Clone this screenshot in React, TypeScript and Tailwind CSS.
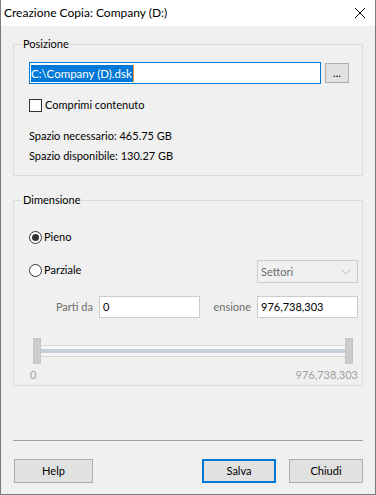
import React from "react";

const font = { fontFamily: 'Lato, "Noto Sans", sans-serif' };

function Legend({ label }: { label: string }) {
  return (
    <span className="absolute left-[8px] -top-[9px] px-[1px] bg-[#f0f0f0] leading-[16px] text-black">
      {label}
    </span>
  );
}

function Radio({ checked }: { checked?: boolean }) {
  return (
    <span className="w-[13px] h-[13px] rounded-full border border-[#333333] bg-white flex items-center justify-center shrink-0">
      {checked && <span className="w-[7px] h-[7px] rounded-full bg-[#333333]" />}
    </span>
  );
}

function Btn({ label, primary, w }: { label: string; primary?: boolean; w: string }) {
  return (
    <button
      className={
        primary
          ? `${w} h-[24px] bg-[#e1e1e1] border-2 border-[#0078d7] text-black leading-[16px]`
          : `${w} h-[24px] bg-[#e1e1e1] border border-[#adadad] text-black leading-[16px]`
      }>
      {label}
    </button>
  );
}

export default function App() {
  return (
    <div
      style={font}
      className="w-[376px] h-[495px] flex flex-col border-x border-b border-[#7a7a7a] bg-[#f0f0f0] text-[11px] text-black overflow-hidden">
      {/* title bar */}
      <div className="h-[26px] bg-white flex items-center justify-between pl-[3px] pr-[9px] shrink-0">
        <span className="text-[12px] leading-[16px]">Creazione Copia: Company (D:)</span>
        <svg width="12" height="12" viewBox="0 0 12 12">
          <path d="M1 1 L11 11 M11 1 L1 11" stroke="#000" strokeWidth="1" />
        </svg>
      </div>

      <div className="flex flex-col px-[12px] pt-[18px]">
        {/* Posizione */}
        <div className="relative border border-[#dcdcdc] pl-[15px] pr-[13px] pt-[17px] pb-[11px] flex flex-col">
          <Legend label="Posizione" />
          <div className="flex items-center">
            <div className="flex-1 h-[22px] border border-[#0078d7] bg-white flex items-center pl-[1px]">
              <span className="bg-[#0078d7] text-white text-[11.5px] leading-[17px] pr-[1px]">C:\Company (D).dsk</span>
              <span className="w-[1px] h-[17px] bg-[#f7941d]" />
            </div>
            <button className="ml-[4px] w-[24px] h-[20px] bg-[#e1e1e1] border border-[#adadad] leading-[12px] text-black">
              ...
            </button>
          </div>
          <div className="mt-[13px] h-[16px] flex items-center gap-[3px]">
            <span className="w-[13px] h-[13px] border border-[#333333] bg-white" />
            <span className="leading-[16px]">Comprimi contenuto</span>
          </div>
          <div className="mt-[15px] leading-[16px]">Spazio necessario: 465.75 GB</div>
          <div className="mt-[4px] leading-[16px]">Spazio disponibile: 130.27 GB</div>
        </div>

        {/* Dimensione */}
        <div className="relative mt-[24px] border border-[#dcdcdc] pl-[15px] pr-[4px] pt-[28px] pb-[2px] flex flex-col">
          <Legend label="Dimensione" />
          <div className="h-[16px] flex items-center gap-[2px]">
            <Radio checked />
            <span className="leading-[16px]">Pieno</span>
          </div>
          <div className="mt-[15px] h-[23px] flex items-start justify-between">
            <div className="flex items-center gap-[2px] mt-[2px]">
              <Radio />
              <span className="leading-[16px]">Parziale</span>
            </div>
            <div className="w-[101px] h-[23px] border border-[#cccccc] bg-[#f0f0f0] flex items-center justify-between pl-[3px] pr-[6px] text-[#6d6d6d]">
              <span className="leading-[16px]">Settori</span>
              <svg width="10" height="6" viewBox="0 0 10 6">
                <path d="M0.5 0.5 L5 5 L9.5 0.5" fill="none" stroke="#bdbdbd" strokeWidth="1" />
              </svg>
            </div>
          </div>
          <div className="mt-[13px] h-[22px] flex items-center">
            <span className="w-[64px] text-right text-[#6d6d6d] leading-[16px]">Parti da</span>
            <div className="ml-[6px] w-[101px] h-[22px] border border-[#cccccc] bg-white flex items-center pl-[3px] leading-[16px]">
              0
            </div>
            <span className="w-[51px] text-right text-[#6d6d6d] leading-[16px] overflow-hidden whitespace-nowrap">
              ensione
            </span>
            <div className="ml-[6px] w-[101px] h-[22px] border border-[#cccccc] bg-white flex items-center pl-[3px] leading-[16px]">
              976,738,303
            </div>
          </div>
          <div className="mt-[20px] h-[26px] flex items-center pl-[4px] pr-[5px]">
            <span className="w-[8px] h-[26px] bg-[#cccccc] border border-[#c4c4c4]" />
            <div className="flex-1 h-[12px] border-y border-[#d9d9d9] bg-[#f7f7f7] flex items-center">
              <div className="w-full h-[4px] bg-[#c3cfdc]" />
            </div>
            <span className="w-[8px] h-[26px] bg-[#cccccc] border border-[#c4c4c4]" />
          </div>
          <div className="mt-[3px] h-[16px] flex justify-between text-[#a0a0a0] leading-[16px] -ml-[14px]">
            <span className="pl-[15px]">0</span>
            <span>976,738,303</span>
          </div>
        </div>

        <div className="mt-[54px] h-[1px] bg-[#a0a0a0]" />

        <div className="mt-[18px] flex items-center">
          <div className="ml-[1px]">
            <Btn label="Help" w="w-[79px]" />
          </div>
          <div className="flex-1" />
          <Btn label="Salva" primary w="w-[74px]" />
          <div className="ml-[13px]">
            <Btn label="Chiudi" w="w-[74px]" />
          </div>
        </div>
      </div>
    </div>
  );
}
